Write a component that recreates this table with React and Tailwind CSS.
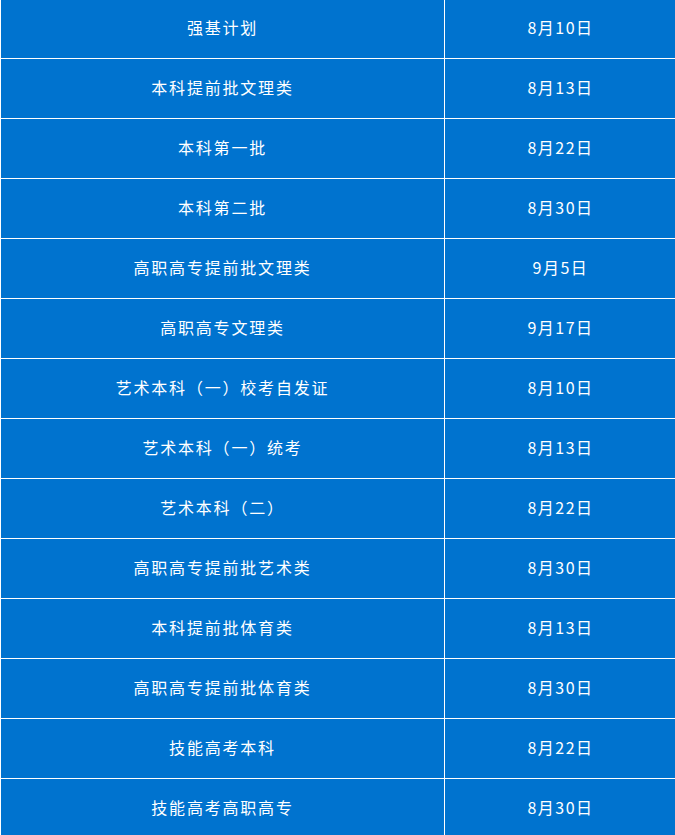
import React from 'react';

const rows = [
  ['强基计划', '8月10日'],
  ['本科提前批文理类', '8月13日'],
  ['本科第一批', '8月22日'],
  ['本科第二批', '8月30日'],
  ['高职高专提前批文理类', '9月5日'],
  ['高职高专文理类', '9月17日'],
  ['艺术本科（一）校考自发证', '8月10日'],
  ['艺术本科（一）统考', '8月13日'],
  ['艺术本科（二）', '8月22日'],
  ['高职高专提前批艺术类', '8月30日'],
  ['本科提前批体育类', '8月13日'],
  ['高职高专提前批体育类', '8月30日'],
  ['技能高考本科', '8月22日'],
  ['技能高考高职高专', '8月30日'],
];

const App = () => {
  return (
    <div
      className="w-[675px] h-[835px] overflow-hidden bg-[#0073cf] text-white"
      style={{ fontFamily: '"Noto Sans CJK SC", "Noto Sans", sans-serif' }}
    >
      <div className="-mt-px border-l border-white w-[676px]">
        {rows.map(([name, date], i) => (
          <div key={i} className="flex h-[60px] border-b border-white">
            <div className="w-[443px] pb-1 flex items-center justify-center text-[16px] tracking-[1.8px] font-normal">
              {name}
            </div>
            <div className="flex-1 pb-1 border-l border-white flex items-center justify-center text-[16px] tracking-[1.5px] font-normal">
              {date}
            </div>
          </div>
        ))}
      </div>
    </div>
  );
};

export default App;
